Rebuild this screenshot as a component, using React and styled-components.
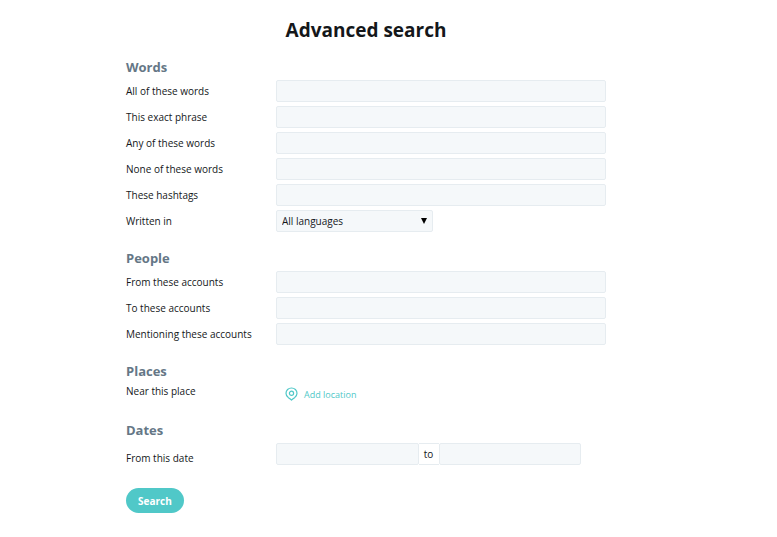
import React from 'react';
import styled, { createGlobalStyle } from 'styled-components';

const GlobalStyle = createGlobalStyle`
  * {
    box-sizing: border-box;
  }

  body {
    margin: 0;
    background-color: #fff;
    color: #14171a;
    font-family: "Open Sans", "Noto Sans", sans-serif;
    font-size: 10px;
  }

  input, select, button {
    font-family: inherit;
    font-size: inherit;
    color: inherit;
  }
`;

// Styled components
const Page = styled.main`
  padding: 16px 45px 24px 0;
`;

const SearchForm = styled.form`
  max-width: 480px;
  margin: 0 auto;
`;

const Title = styled.h1`
  margin: 0 0 10px;
  font-size: 19px;
  line-height: 28px;
  font-weight: 700;
  text-align: center;
`;

const Section = styled.section`
  margin-bottom: 13px;
`;

const SectionTitle = styled.h2`
  margin: 0;
  font-size: 13px;
  line-height: 26px;
  font-weight: 700;
  color: #657786;
`;

const Fields = styled.div`
  display: flex;
  flex-direction: column;
  gap: 4px;
`;

const Row = styled.div`
  display: grid;
  grid-template-columns: 150px 1fr;
  align-items: ${(props) => props.$align || 'center'};
`;

const Label = styled.label`
  line-height: 14px;
`;

const TextInput = styled.input`
  width: 100%;
  min-width: 0;
  height: 22px;
  padding: 0 6px;
  background-color: #f5f8fa;
  border: 1px solid #e6ecf0;
  border-radius: 2px;
`;

const SelectBox = styled.div`
  display: grid;
  grid-template-columns: 1fr 18px;
  align-items: center;
  width: 157px;
  height: 22px;
  background-color: #f5f8fa;
  border: 1px solid #e6ecf0;
  border-radius: 2px;
`;

const Select = styled.select`
  grid-area: 1 / 1 / 2 / 3;
  height: 20px;
  padding: 0 18px 0 5px;
  appearance: none;
  background: transparent;
  border: 0;
`;

const Arrow = styled.svg`
  grid-area: 1 / 2 / 2 / 3;
  width: 6px;
  height: 6px;
  margin-left: 7px;
  pointer-events: none;
`;

const LocationButton = styled.button`
  display: flex;
  align-items: center;
  justify-self: start;
  gap: 6px;
  height: 20px;
  padding: 0 9px;
  background: none;
  border: 0;
  font-size: 9px;
  color: #50c8c8;
  cursor: pointer;
`;

const DateRange = styled.div`
  display: flex;
  max-width: 305px;
`;

const DateSeparator = styled.span`
  flex: 0 0 20px;
  border: solid #e6ecf0;
  border-width: 1px 0;
  line-height: 20px;
  text-align: center;
`;

const SubmitButton = styled.button`
  height: 25px;
  margin-top: 10px;
  padding: 0 12px;
  background-color: #50c8c8;
  border: 0;
  border-radius: 13px;
  font-weight: 700;
  color: #fff;
  cursor: pointer;
`;

const wordFields = [
  { id: 'all', label: 'All of these words' },
  { id: 'phrase', label: 'This exact phrase' },
  { id: 'any', label: 'Any of these words' },
  { id: 'none', label: 'None of these words' },
  { id: 'tags', label: 'These hashtags' },
];

const peopleFields = [
  { id: 'from', label: 'From these accounts' },
  { id: 'to', label: 'To these accounts' },
  { id: 'mentioning', label: 'Mentioning these accounts' },
];

const Field = ({ id, label }) => (
  <Row>
    <Label htmlFor={id}>{label}</Label>
    <TextInput id={id} name={id} type="text" />
  </Row>
);

const PinIcon = () => (
  <svg width="13" height="14" viewBox="0 0 13 14" fill="none" stroke="currentColor" strokeWidth="1.2" aria-hidden="true">
    <path d="M6.5 13.1C5.6 12 4.6 11.4 3.3 10.6C1.7 9.5 1 8 1 6.3C1 3.3 3.4 1 6.5 1S12 3.3 12 6.3C12 8 11.3 9.5 9.7 10.6C8.4 11.4 7.4 12 6.5 13.1Z" strokeLinejoin="round" />
    <circle cx="6.5" cy="6.3" r="2.1" />
  </svg>
);

const App = () => {
  return (
    <>
      <GlobalStyle />
      <Page>
        <SearchForm onSubmit={(e) => e.preventDefault()}>
          <Title>Advanced search</Title>

          <Section>
            <SectionTitle>Words</SectionTitle>
            <Fields>
              {wordFields.map((field) => (
                <Field key={field.id} {...field} />
              ))}
              <Row>
                <Label htmlFor="lang">Written in</Label>
                <SelectBox>
                  <Select id="lang" name="lang">
                    <option>All languages</option>
                  </Select>
                  <Arrow viewBox="0 0 6 6" aria-hidden="true">
                    <path d="M0 0H6L3 6Z" fill="#000" />
                  </Arrow>
                </SelectBox>
              </Row>
            </Fields>
          </Section>

          <Section>
            <SectionTitle>People</SectionTitle>
            <Fields>
              {peopleFields.map((field) => (
                <Field key={field.id} {...field} />
              ))}
            </Fields>
          </Section>

          <Section>
            <SectionTitle>Places</SectionTitle>
            <Row $align="start">
              <Label htmlFor="near">Near this place</Label>
              <LocationButton id="near" type="button" aria-label="Add location">
                <PinIcon />
                Add location
              </LocationButton>
            </Row>
          </Section>

          <Section>
            <SectionTitle>Dates</SectionTitle>
            <Row $align="end">
              <Label htmlFor="since">From this date</Label>
              <DateRange>
                <TextInput id="since" name="since" type="text" />
                <DateSeparator>to</DateSeparator>
                <TextInput name="until" type="text" aria-label="To this date" />
              </DateRange>
            </Row>
          </Section>

          <SubmitButton type="submit">Search</SubmitButton>
        </SearchForm>
      </Page>
    </>
  );
};

export default App;
